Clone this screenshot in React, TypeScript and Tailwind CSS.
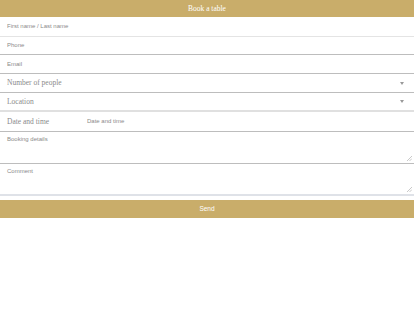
const sans = { fontFamily: '"Liberation Sans", Arial, sans-serif' };

const Field = ({ label, h, line }: { label: string; h: string; line: string }) => (
  <div className={`flex items-center border-b px-[7px] ${h} ${line}`}>
    <input
      placeholder={label}
      className="w-full bg-transparent font-['Liberation_Sans',Arial,sans-serif] text-[6px] text-[#555] outline-none placeholder:text-[#8a8a8a]"
    />
  </div>
);

const SelectRow = ({ label, line }: { label: string; line: string }) => (
  <div className={`flex h-[19px] items-center justify-between px-[7px] ${line}`}>
    <span className="font-['Liberation_Serif','Times_New_Roman',serif] text-[7.5px] text-[#8a8a8a]">
      {label}
    </span>
    <span className="mr-[3px] h-0 w-0 border-x-[2.5px] border-t-[3px] border-x-transparent border-t-[#999]" />
  </div>
);

const Grip = () => (
  <svg className="pointer-events-none absolute bottom-[2px] right-[2px]" width="5" height="5" viewBox="0 0 5 5">
    <path d="M5 0L0 5M5 2.5L2.5 5" stroke="#bbb" strokeWidth="0.8" />
  </svg>
);

const Area = ({ label, line }: { label: string; line: string }) => (
  <div className={`relative flex h-[32px] ${line}`}>
    <textarea
      placeholder={label}
      className="h-full w-full resize-none bg-transparent px-[7px] pt-[3px] font-['Liberation_Sans',Arial,sans-serif] text-[6px] text-[#555] outline-none placeholder:text-[#8a8a8a]"
    />
    <Grip />
  </div>
);

export default function App() {
  return (
    <div className="h-[310px] w-[414px] bg-white" style={sans}>
      <div className="flex h-[17px] items-center justify-center bg-[#c9ad6a]">
        <span className="font-['Liberation_Serif','Times_New_Roman',serif] text-[7.5px] text-white">
          Book a table
        </span>
      </div>
      <form>
        <Field label="First name / Last name" h="h-[20px]" line="border-[#e4e4e4]" />
        <Field label="Phone" h="h-[18px]" line="border-[#bdbdbd]" />
        <Field label="Email" h="h-[19px]" line="border-[#bdbdbd]" />
        <SelectRow label="Number of people" line="border-b border-[#bdbdbd]" />
        <SelectRow label="Location" line="border-b-2 border-[#e0e0e0]" />
        <div className="flex h-[20px] items-center border-b border-[#bdbdbd] px-[7px]">
          <span className="w-[80px] font-['Liberation_Serif','Times_New_Roman',serif] text-[7.5px] text-[#8a8a8a]">
            Date and time
          </span>
          <input
            placeholder="Date and time"
            className="flex-1 bg-transparent font-['Liberation_Sans',Arial,sans-serif] text-[6px] outline-none placeholder:text-[#8a8a8a]"
          />
        </div>
        <Area label="Booking details" line="border-b border-[#bdbdbd]" />
        <Area label="Comment" line="border-b-2 border-[#dfe2e8]" />
        <div className="pt-[4px]">
          <button
            type="button"
            className="flex h-[18px] w-full items-center justify-center bg-[#c9ad6a] font-['Liberation_Sans',Arial,sans-serif] text-[6.5px] text-white"
          >
            Send
          </button>
        </div>
      </form>
    </div>
  );
}
